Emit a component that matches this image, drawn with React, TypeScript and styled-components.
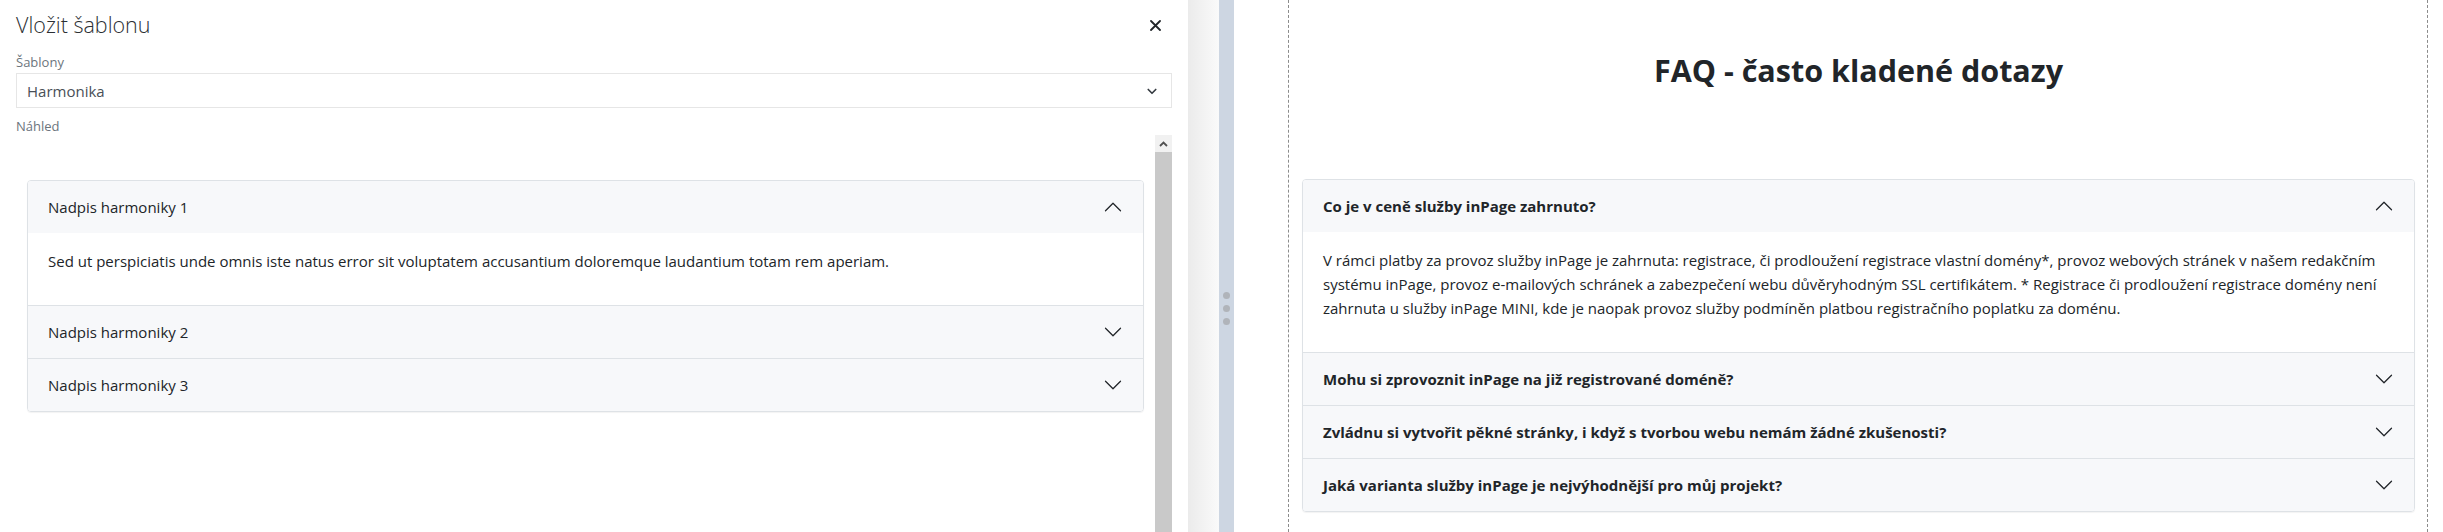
import React from "react";
import styled, { createGlobalStyle } from "styled-components";

const GlobalStyle = createGlobalStyle`
  html, body { margin: 0; padding: 0; background: #ffffff; }
  body { font-family: "Open Sans", "Noto Sans", sans-serif; color: #212529; }
  * { box-sizing: border-box; }
`;

const Page = styled.div`
  display: flex;
  width: 2443px;
  height: 532px;
  overflow: hidden;
  background: #fff;
`;

const LeftPanel = styled.div`
  width: 1188px;
  flex: none;
  display: flex;
  flex-direction: column;
  padding: 0 16px 0 16px;
  background: #fff;
`;

const PanelHeader = styled.div`
  display: flex;
  align-items: center;
  justify-content: space-between;
  margin-top: 13px;
  height: 24px;
`;

const Title = styled.h2`
  margin: 0;
  font-size: 21.5px;
  font-weight: 300;
  line-height: 24px;
  color: #2b2f33;
`;

const CloseButton = styled.button`
  width: 16px;
  height: 16px;
  margin-right: 9px;
  padding: 0;
  border: 0;
  background: transparent;
  display: flex;
  align-items: center;
  justify-content: center;
  color: #212529;
`;

const FieldLabel = styled.div<{ $top: number }>`
  margin-top: ${(p) => p.$top}px;
  font-size: 13px;
  line-height: 18px;
  color: #6c757d;
`;

const Select = styled.div`
  margin-top: 2px;
  height: 35px;
  border: 1px solid #e6e6e6;
  display: flex;
  align-items: center;
  justify-content: space-between;
  padding: 0 13px 0 10px;
  font-size: 15px;
  color: #495057;
`;

const PreviewArea = styled.div`
  flex: 1;
  min-height: 0;
  display: flex;
`;

const PreviewContent = styled.div`
  flex: 1;
  padding: 45px 11px 0 11px;
`;

const Scrollbar = styled.div`
  width: 17px;
  flex: none;
  display: flex;
  flex-direction: column;
`;

const ScrollArrow = styled.div`
  height: 17px;
  background: #f1f1f1;
  display: flex;
  align-items: center;
  justify-content: center;
`;

const ScrollThumb = styled.div`
  flex: 1;
  background: #c9c9c9;
`;

const Accordion = styled.div`
  border: 1px solid #dee2e6;
  border-radius: 4px;
  overflow: hidden;
  box-shadow: 0 1px 1px rgba(0, 0, 0, 0.05);
`;

const Item = styled.div`
  & + & { border-top: 1px solid #dee2e6; }
`;

const ItemHeader = styled.div<{ $bold?: boolean }>`
  display: flex;
  align-items: center;
  justify-content: space-between;
  height: 52px;
  padding: 0 20px;
  background: #f7f8fa;
  font-size: 15px;
  line-height: 24px;
  font-weight: ${(p) => (p.$bold ? 700 : 400)};
  color: #212529;
`;

const ItemBody = styled.div`
  padding: 16px 20px;
  background: #fff;
  font-size: 15px;
  line-height: 24px;
  color: #212529;
  p { margin: 0 0 16px; }
`;

const Chevron = styled.svg<{ $up?: boolean }>`
  width: 20px;
  height: 20px;
  flex: none;
  transform: ${(p) => (p.$up ? "rotate(180deg)" : "none")};
`;

const Shadow = styled.div`
  width: 31px;
  flex: none;
  background: linear-gradient(to right, #ebebeb, #fafafa);
`;

const Splitter = styled.div`
  width: 15px;
  flex: none;
  background: #cdd6e2;
  display: flex;
  flex-direction: column;
  align-items: center;
  gap: 6px;
  padding-top: 292px;
`;

const Dot = styled.span`
  width: 7px;
  height: 7px;
  border-radius: 50%;
  background: #b0b4ba;
`;

const Canvas = styled.div`
  flex: 1;
  display: flex;
  padding: 0 15px 0 54px;
`;

const Frame = styled.div`
  flex: 1;
  border-left: 1px dashed #8c8c8c;
  border-right: 1px dashed #8c8c8c;
  padding: 0 12px 0 13px;
`;

const Heading = styled.h1`
  margin: 53px 0 92px;
  text-align: center;
  font-size: 30.5px;
  line-height: 34px;
  font-weight: 700;
  color: #212529;
`;

const ChevronIcon = ({ up }: { up?: boolean }) => (
  <Chevron $up={up} viewBox="0 0 16 16">
    <path
      fill="none"
      stroke="#212529"
      strokeLinecap="round"
      strokeLinejoin="round"
      d="M2 5L8 11L14 5"
    />
  </Chevron>
);

type Entry = { title: string; body?: string };

const AccordionList = ({ items, bold }: { items: Entry[]; bold?: boolean }) => (
  <Accordion>
    {items.map((it, i) => (
      <Item key={i}>
        <ItemHeader $bold={bold}>
          <span>{it.title}</span>
          <ChevronIcon up={!!it.body} />
        </ItemHeader>
        {it.body && (
          <ItemBody>
            <p>{it.body}</p>
          </ItemBody>
        )}
      </Item>
    ))}
  </Accordion>
);

const leftItems: Entry[] = [
  {
    title: "Nadpis harmoniky 1",
    body: "Sed ut perspiciatis unde omnis iste natus error sit voluptatem accusantium doloremque laudantium totam rem aperiam.",
  },
  { title: "Nadpis harmoniky 2" },
  { title: "Nadpis harmoniky 3" },
];

const rightItems: Entry[] = [
  {
    title: "Co je v ceně služby inPage zahrnuto?",
    body: "V rámci platby za provoz služby inPage je zahrnuta: registrace, či prodloužení registrace vlastní domény*, provoz webových stránek v našem redakčním systému inPage, provoz e-mailových schránek a zabezpečení webu důvěryhodným SSL certifikátem. * Registrace či prodloužení registrace domény není zahrnuta u služby inPage MINI, kde je naopak provoz služby podmíněn platbou registračního poplatku za doménu.",
  },
  { title: "Mohu si zprovoznit inPage na již registrované doméně?" },
  { title: "Zvládnu si vytvořit pěkné stránky, i když s tvorbou webu nemám žádné zkušenosti?" },
  { title: "Jaká varianta služby inPage je nejvýhodnější pro můj projekt?" },
];

export default function App() {
  return (
    <>
      <GlobalStyle />
      <Page>
        <LeftPanel>
          <PanelHeader>
            <Title>Vložit šablonu</Title>
            <CloseButton aria-label="Zavřít">
              <svg width="11" height="11" viewBox="0 0 11 11">
                <path d="M1 1L10 10M10 1L1 10" stroke="#212529" strokeWidth="1.8" strokeLinecap="round" />
              </svg>
            </CloseButton>
          </PanelHeader>
          <FieldLabel $top={16}>Šablony</FieldLabel>
          <Select>
            <span>Harmonika</span>
            <svg width="12" height="12" viewBox="0 0 16 16">
              <path
                fill="none"
                stroke="#343a40"
                strokeWidth="2.2"
                strokeLinecap="round"
                strokeLinejoin="round"
                d="M3 6l5 5 5-5"
              />
            </svg>
          </Select>
          <FieldLabel $top={9}>Náhled</FieldLabel>
          <PreviewArea>
            <PreviewContent>
              <AccordionList items={leftItems} />
            </PreviewContent>
            <Scrollbar>
              <ScrollArrow>
                <svg width="9" height="6" viewBox="0 0 9 6">
                  <path d="M1 5L4.5 1.5L8 5" fill="none" stroke="#505050" strokeWidth="1.8" />
                </svg>
              </ScrollArrow>
              <ScrollThumb />
            </Scrollbar>
          </PreviewArea>
        </LeftPanel>
        <Shadow />
        <Splitter>
          <Dot />
          <Dot />
          <Dot />
        </Splitter>
        <Canvas>
          <Frame>
            <Heading>FAQ - často kladené dotazy</Heading>
            <AccordionList items={rightItems} bold />
          </Frame>
        </Canvas>
      </Page>
    </>
  );
}
